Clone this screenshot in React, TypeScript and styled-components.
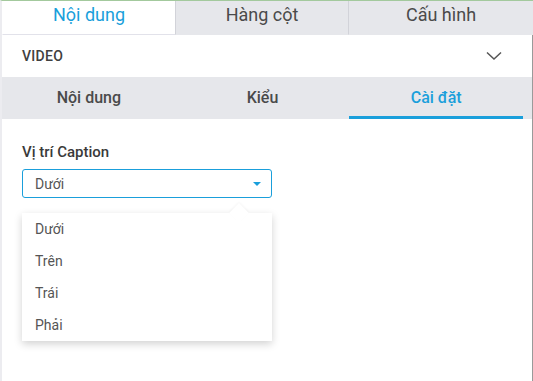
import React, { useState } from "react";
import styled, { createGlobalStyle } from "styled-components";

const Global = createGlobalStyle`
  html, body { margin: 0; padding: 0; background: #fff; }
  body { font-family: Roboto, "Noto Sans", "Liberation Sans", sans-serif; }
  * { box-sizing: border-box; }
`;

const Frame = styled.div`
  width: 533px;
  height: 381px;
  border-top: 1px solid #a3c99d;
  border-left: 2px solid #ececf0;
  display: flex;
  flex-direction: column;
  overflow: hidden;
`;

const TopTabs = styled.div`
  display: flex;
  height: 34px;
  flex-shrink: 0;
`;

const TopTab = styled.div<{ $active?: boolean }>`
  width: 173px;
  display: flex;
  align-items: flex-start;
  justify-content: center;
  padding-top: 3px;
  font-size: 18px;
  color: ${({ $active }) => ($active ? "#1a9fdb" : "#4a4a4a")};
  background: ${({ $active }) => ($active ? "#fff" : "#e6e7eb")};
  border-bottom: 1px solid ${({ $active }) => ($active ? "#e2e2ea" : "#e6e7eb")};
  border-left: 1px solid ${({ $active }) => ($active ? "transparent" : "#d2d3d9")};
  &:last-child {
    flex: 1;
  }
`;

const Body = styled.div`
  flex: 1;
  border-right: 1px solid #9a9a9a;
  display: flex;
  flex-direction: column;
`;

const SectionHeader = styled.div`
  height: 42px;
  display: flex;
  align-items: center;
  justify-content: space-between;
  padding: 0 30px 0 20px;
  font-size: 14px;
  font-weight: 500;
  color: #404040;
  letter-spacing: 0.3px;
`;

const SubTabs = styled.div`
  display: flex;
  height: 42px;
  background: #e6e7eb;
  padding-right: 9px;
`;

const SubTab = styled.div<{ $active?: boolean }>`
  flex: 1;
  display: flex;
  align-items: center;
  justify-content: center;
  font-size: 16px;
  font-weight: 500;
  color: ${({ $active }) => ($active ? "#1a9fdb" : "#4a4a4a")};
  border-bottom: 3px solid ${({ $active }) => ($active ? "#1a9fdb" : "transparent")};
  padding-top: 2px;
`;

const Content = styled.div`
  padding: 24px 20px 0 20px;
`;

const Label = styled.div`
  font-size: 15px;
  font-weight: 500;
  color: #3a3a3a;
  margin-bottom: 8px;
`;

const Field = styled.div`
  position: relative;
  width: 250px;
`;

const SelectBox = styled.div`
  height: 29px;
  border: 1px solid #1a9fdb;
  border-radius: 3px;
  display: flex;
  align-items: center;
  justify-content: space-between;
  padding: 0 10px 0 12px;
  font-size: 14px;
  color: #555;
`;

const Caret = styled.span`
  width: 0;
  height: 0;
  border-left: 4px solid transparent;
  border-right: 4px solid transparent;
  border-top: 4px solid #1a9fdb;
`;

const Menu = styled.div`
  position: absolute;
  top: 44px;
  left: 0;
  width: 250px;
  background: #fff;
  box-shadow: 0 3px 8px rgba(0, 0, 0, 0.18);
`;

const MenuArrow = styled.div`
  position: absolute;
  top: -7px;
  right: 26px;
  width: 14px;
  height: 14px;
  background: #fff;
  transform: rotate(45deg);
  box-shadow: -1px -1px 2px rgba(0, 0, 0, 0.04);
`;

const MenuItem = styled.div`
  position: relative;
  height: 32px;
  display: flex;
  align-items: center;
  padding-left: 13px;
  font-size: 14px;
  color: #555;
`;

const Chevron = () => (
  <svg width="16" height="10" viewBox="0 0 16 10" fill="none">
    <path d="M1 1.5 L8 8 L15 1.5" stroke="#555" strokeWidth="1.5" />
  </svg>
);

export default function App() {
  const [top] = useState(0);
  const [sub] = useState(2);
  const options = ["Dưới", "Trên", "Trái", "Phải"];
  return (
    <>
      <Global />
      <Frame>
        <TopTabs>
          {["Nội dung", "Hàng cột", "Cấu hình"].map((t, i) => (
            <TopTab key={t} $active={i === top}>
              {t}
            </TopTab>
          ))}
        </TopTabs>
        <Body>
          <SectionHeader>
            <span>VIDEO</span>
            <Chevron />
          </SectionHeader>
          <SubTabs>
            {["Nội dung", "Kiểu", "Cài đặt"].map((t, i) => (
              <SubTab key={t} $active={i === sub}>
                {t}
              </SubTab>
            ))}
          </SubTabs>
          <Content>
            <Label>Vị trí Caption</Label>
            <Field>
              <SelectBox>
                <span>Dưới</span>
                <Caret />
              </SelectBox>
              <Menu>
                <MenuArrow />
                {options.map((o) => (
                  <MenuItem key={o}>{o}</MenuItem>
                ))}
              </Menu>
            </Field>
          </Content>
        </Body>
      </Frame>
    </>
  );
}
